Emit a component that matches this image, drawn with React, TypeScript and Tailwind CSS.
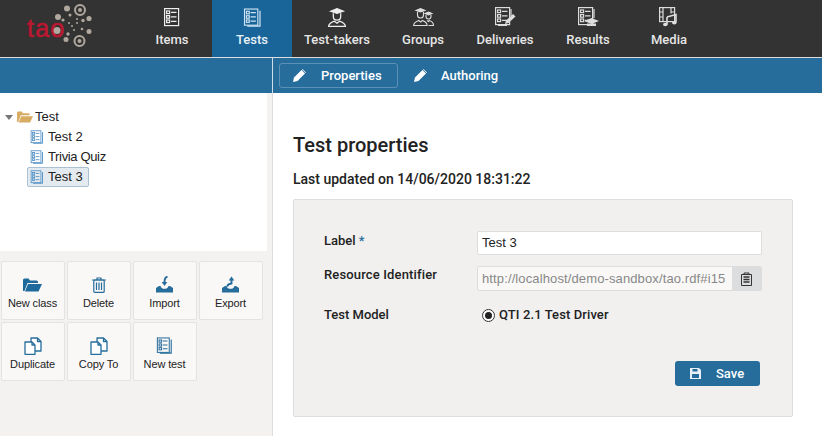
import React from 'react';

// Shared checklist sheet used by items/tests icons
const Sheet = ({ x = 0, y = 0, stroke = 'currentColor', fill = 'none' }: { x?: number; y?: number; stroke?: string; fill?: string }) => (
    <g transform={`translate(${x} ${y})`} stroke={stroke} fill={fill} strokeWidth="1.2">
        <rect x="0.6" y="0.6" width="14" height="17" fill={fill} />
        <rect x="2.6" y="3" width="3" height="2.6" fill="none" />
        <rect x="2.6" y="7.6" width="3" height="2.6" fill="none" />
        <rect x="2.6" y="12" width="3" height="2.6" fill="none" />
        <path d="M7 4.3h5.5M7 8.9h5.5M7 13.3h5.5" />
    </g>
);

const ItemsIcon = () => (
    <svg width="16" height="19" viewBox="0 0 16 19" className="text-[#eee]">
        <Sheet />
    </svg>
);

const TestsIcon = ({ size = 19, className = 'text-[#cfe3f2]' }: { size?: number; className?: string }) => (
    <svg width={size} height={size} viewBox="0 0 19 20" className={className}>
        <path d="M17.4 3v16H4" fill="none" stroke="currentColor" strokeWidth="1.3" />
        <Sheet x={0.5} y={0.5} />
    </svg>
);

const TakersIcon = () => (
    <svg width="20" height="20" viewBox="0 0 18 19" className="text-[#eee]">
        <g fill="none" stroke="currentColor" strokeWidth="1.2">
            <path d="M3 4 9 1.5 15 4 9 6Z" fill="currentColor" />
            <path d="M5.5 6v3c0 2 1.5 3.5 3.5 3.500s3.500-1.500 3.500-3.500V6" />
            <path d="M1 18.500c0-2.500 3-4 5.500-5l2.500 2 2.500-2c2.500 1 5.500 2.500 5.500 5Z" />
        </g>
    </svg>
);

const GroupsIcon = () => (
    <svg width="21" height="20" viewBox="0 0 21 20" className="text-[#ddd]">
        <g fill="none" stroke="currentColor" strokeWidth="1.1">
            <path d="M3 3.500 7.500 1.500 12 3.500 7.500 5Z" fill="currentColor" />
            <path d="M4.500 5v3c0 1.500 1.200 3 3 3s3-1.500 3-3V5" />
            <path d="M.6 18.500c0-2.500 2.500-4 5-5l2 1.500 2-1.500c2.500 1 4.500 2.500 4.500 5Z" />
            <path d="M12 6.500 15.500 5 19 6.500 15.500 8Z" fill="currentColor" />
            <path d="M13 8v1.500c0 1.200 1 2.500 2.500 2.500S18 10.700 18 9.500V8" />
            <path d="M15.500 18.500h5c0-2.500-1.500-4-4-5l-1 1-1.500-1" />
        </g>
    </svg>
);

const DeliveriesIcon = () => (
    <svg width="21" height="20" viewBox="0 0 21 20" className="text-[#ddd]">
        <path d="M3 18.500h9M16 2v7" stroke="currentColor" fill="none" strokeWidth="1.200" />
        <Sheet />
        <path d="M10 17l1-3.500 7-6.500 2.500 2.500-7 6.500Z" fill="currentColor" />
    </svg>
);

const ResultsIcon = () => (
    <svg width="21" height="20" viewBox="0 0 21 20" className="text-[#ddd]">
        <path d="M16 2v9" stroke="currentColor" fill="none" strokeWidth="1.200" />
        <Sheet />
        <path d="M6 14l7.500-3 7.500 3-7.500 3Z" fill="currentColor" />
        <path d="M9 16.500v2.500h9v-2.500" fill="currentColor" />
    </svg>
);

const MediaIcon = () => (
    <svg width="20" height="20" viewBox="0 0 20 20" className="text-[#ddd]">
        <g fill="none" stroke="currentColor" strokeWidth="1.200">
            <rect x="0.6" y="0.6" width="15" height="14" />
            <path d="M4 .6v14M12 .6v6M.6 5h3.400M.6 10h3.400M12 5h3.500" />
        </g>
        <path d="M8 10v7.500M8 10l9-2.500v8" fill="none" stroke="currentColor" strokeWidth="1.600" />
        <ellipse cx="6.300" cy="17.500" rx="2.300" ry="1.800" fill="currentColor" />
        <ellipse cx="15.300" cy="15.700" rx="2.300" ry="1.800" fill="currentColor" />
    </svg>
);

const PencilIcon = () => (
    <svg width="13" height="13" viewBox="0 0 13 13" className="text-white shrink-0">
        <path d="M0 13l1-4.500L8.500 1l3.500 3.500L4.500 12Z" fill="currentColor" />
        <path d="M9.500 0 13 3.500l-.5.500L9 .5Z" fill="currentColor" />
    </svg>
);

const TaoLogo = () => (
    <svg width="80" height="50" viewBox="0 0 80 50" className="block">
        <text x="1" y="35" fill="#bb1731" stroke="#bb1731" strokeWidth="0.6" fontSize="25" letterSpacing="1.2" fontFamily="'Liberation Sans', sans-serif">tao</text>
        <g fill="#b0a89e">
            <circle cx="31" cy="28.500" r="3.500" />
            <circle cx="41" cy="6.500" r="3" />
            <circle cx="32" cy="15" r="3" />
            <circle cx="37" cy="18" r="1.600" />
            <circle cx="44" cy="13" r="1.500" />
            <circle cx="40" cy="37.500" r="2.500" />
            <circle cx="42" cy="32" r="1.700" />
            <circle cx="63" cy="16.500" r="2.600" />
            <circle cx="57" cy="18.500" r="1.700" />
            <circle cx="63" cy="29.500" r="2.500" />
            <circle cx="56" cy="27" r="1.300" />
            <circle cx="46" cy="24" r="1" />
            <circle cx="51" cy="21" r="1" />
            <circle cx="48" cy="28" r="1" />
            <circle cx="51" cy="17" r="1" />
            <circle cx="43" cy="21" r="1" />
        </g>
        <g fill="none" stroke="#b0a89e">
            <circle cx="54" cy="8" r="5" strokeWidth="2" />
            <circle cx="53.500" cy="39" r="5" strokeWidth="2" />
        </g>
        <circle cx="54" cy="8" r="2" fill="#b0a89e" />
        <circle cx="53.500" cy="39" r="2" fill="#b0a89e" />
    </svg>
);

const navItems = [
    { label: 'Items', icon: <ItemsIcon />, width: 'w-[80px]' },
    { label: 'Tests', icon: <TestsIcon />, width: 'w-[80px]', active: true },
    { label: 'Test-takers', icon: <TakersIcon />, width: 'w-[90px]' },
    { label: 'Groups', icon: <GroupsIcon />, width: 'w-[82px]' },
    { label: 'Deliveries', icon: <DeliveriesIcon />, width: 'w-[82px]' },
    { label: 'Results', icon: <ResultsIcon />, width: 'w-[84px]' },
    { label: 'Media', icon: <MediaIcon />, width: 'w-[78px]' },
];

const FolderOpenIcon = ({ className, width = 19, height = 14 }: { className: string; width?: number; height?: number }) => (
    <svg width={width} height={height} viewBox="0 0 19 14" className={className}>
        <path d="M0 13V2q0-1.500 1.500-1.500h4L7 2.500h6.500q1.500 0 1.500 1.500v1H4.500L1.500 13Z" fill="currentColor" />
        <path d="M5 6h14l-3.500 7.500H2Z" fill="currentColor" />
    </svg>
);

const TrashIcon = () => (
    <svg width="14" height="16" viewBox="0 0 14 16" className="text-[#266d9c]">
        <g fill="none" stroke="currentColor" strokeWidth="1.200">
            <path d="M0 3h14M5 3V1h4v2" />
            <rect x="1.800" y="3" width="10.400" height="12.400" rx="1" />
            <path d="M4.500 5.500v7.500M7 5.500v7.500M9.500 5.500v7.500" />
        </g>
    </svg>
);

const TrayIcon = ({ up }: { up?: boolean }) => (
    <svg width="17" height="17" viewBox="0 0 17 17" className="text-[#266d9c]">
        <path d="M0 12 3 10h1.500c.5 2 2.200 2.800 4 2.800s3.500-.8 4-2.800H14l3 2v4.500H0Z" fill="currentColor" />
        {up ? (
            <>
                <path d="M5.200 10.500C5.500 8.500 7.500 7.800 9.500 7.500V4" fill="none" stroke="currentColor" strokeWidth="1.900" />
                <path d="M6.700 4.500h5.600L9.500 .5Z" fill="currentColor" />
            </>
        ) : (
            <>
                <path d="M11.500.5C9.500 1 8.500 2.500 8.500 6" fill="none" stroke="currentColor" strokeWidth="1.900" />
                <path d="M5.700 6h5.600L8.500 10Z" fill="currentColor" />
            </>
        )}
    </svg>
);

const DuplicateIcon = () => (
    <svg width="18" height="18" viewBox="0 0 18 18" className="text-[#266d9c]">
        <g fill="#fff" stroke="currentColor" strokeWidth="1.300" strokeLinejoin="round">
            <path d="M7 1h6.500L17 4.500V14H7Z" />
            <path d="M1 5h7l3 3v9.300H1Z" />
            <path d="M8 5v3h3M13.500 1v3.500H17" fill="none" />
        </g>
    </svg>
);

const actions = [
    { label: 'New class', icon: <FolderOpenIcon className="text-[#1f6a9c]" /> },
    { label: 'Delete', icon: <TrashIcon /> },
    { label: 'Import', icon: <TrayIcon /> },
    { label: 'Export', icon: <TrayIcon up /> },
    { label: 'Duplicate', icon: <DuplicateIcon /> },
    { label: 'Copy To', icon: <DuplicateIcon /> },
    { label: 'New test', icon: <TestsIcon size={17} className="text-[#266d9c]" /> },
];

const TreeIcon = () => <TestsIcon size={14} className="text-[#4f8fc4]" />;

const medium = "font-['Roboto',sans-serif] font-medium";

export default function App() {
    return (
        <div className="w-[822px] h-[436px] overflow-hidden flex flex-col bg-white font-['Liberation_Sans',Arial,sans-serif] text-[#222]">
            <header className="h-[57px] bg-[#333] flex shrink-0">
                <div className="w-[132px] pl-[26px] pt-[2px]">
                    <TaoLogo />
                </div>
                {navItems.map((item) => (
                    <div
                        key={item.label}
                        className={`${item.width} flex flex-col items-center pt-[7px] gap-[5px] ${item.active ? 'bg-[#19659a] text-[#e8f1f8]' : 'text-[#e6e6e6]'}`}
                    >
                        <div className="h-[20px] flex items-center">{item.icon}</div>
                        <span className={`text-[13px] leading-[15px] ${medium}`}>{item.label}</span>
                    </div>
                ))}
            </header>

            <div className="flex-1 flex flex-col border-t border-[#ddd] min-h-0">
                <div className="h-[35px] bg-[#266d9c] flex shrink-0">
                    <div className="w-[272px] border-r border-[#cfdde8] box-content" />
                    <div className={`flex items-center pl-[6px] gap-[1px] text-white text-[13px] ${medium}`}>
                        <div className="h-[25px] w-[119px] border border-[#5b91b6] rounded-[3px] flex items-center pl-[13px] gap-[15px]">
                            <PencilIcon />
                            <span>Properties</span>
                        </div>
                        <div className="h-[25px] flex items-center pl-[15px] gap-[14px]">
                            <PencilIcon />
                            <span>Authoring</span>
                        </div>
                    </div>
                </div>

                <div className="flex-1 flex min-h-0">
                    <aside className="w-[273px] shrink-0 bg-[#f3f2f1] border-r border-[#ddd] flex flex-col">
                        <div className="h-[158px] w-[267px] bg-white pt-[14px] pl-[5px] text-[13px] shrink-0">
                            <div className="h-[20px] flex items-center">
                                <span className="w-0 h-0 border-x-[4px] border-x-transparent border-t-[5px] border-t-[#777] mr-[4px]" />
                                <FolderOpenIcon className="text-[#d8ab62]" width={16} height={12} />
                                <span className="ml-[2px]">Test</span>
                            </div>
                            <div className="pl-[22px] flex flex-col items-start">
                                {['Test 2', 'Trivia Quiz', 'Test 3'].map((name) => (
                                    <div
                                        key={name}
                                        className={`h-[20px] flex items-center gap-[4px] pl-[2px] pr-[5px] rounded-[2px] border ${name === 'Test 3' ? 'bg-[#e4ebf0] border-[#a9c1d3]' : 'border-transparent'}`}
                                    >
                                        <TreeIcon />
                                        <span className={name === 'Trivia Quiz' ? 'tracking-[-0.35px]' : ''}>{name}</span>
                                    </div>
                                ))}
                            </div>
                        </div>
                        <div className="grid grid-cols-[64px_64px_64px_64px] gap-[2px] pt-[10px] pl-[0.5px]">
                            {actions.map((a) => (
                                <div
                                    key={a.label}
                                    className="h-[59px] bg-[#f9f8f7] border border-[#e4e3e1] rounded-[2px] flex flex-col items-center pt-[14px]"
                                >
                                    <div className="h-[17px] flex items-center">{a.icon}</div>
                                    <span className="text-[11px] leading-[13px] mt-[4px] text-[#222] tracking-[-0.12px]">{a.label}</span>
                                </div>
                            ))}
                        </div>
                    </aside>

                    <main className="flex-1 pl-[20px] pr-[29px] pt-[40px]">
                        <h1 className={`text-[20px] leading-[24px] ${medium}`}>Test properties</h1>
                        <p className={`text-[14px] leading-[16px] mt-[14px] ${medium}`}>Last updated on 14/06/2020 18:31:22</p>
                        <section className="mt-[12px] h-[218px] bg-[#f1f0ef] border border-[#ddd] rounded-[2px] pt-[31px] pl-[30px]">
                            <div className="flex items-start h-[35px]">
                                <label className={`w-[153px] text-[13px] leading-[16px] pt-[2px] ${medium}`}>
                                    Label <span className="text-[#266d9c]">*</span>
                                </label>
                                <div className="w-[285px] h-[24px] bg-white border border-[#ddd] rounded-[2px] text-[13px] leading-[22px] px-[4px]">Test 3</div>
                            </div>
                            <div className="flex items-start h-[40px]">
                                <label className={`w-[153px] text-[13px] leading-[16px] pt-[1px] tracking-[0.15px] ${medium}`}>Resource Identifier</label>
                                <div className="w-[285px] h-[25px] flex border border-[#ddd] rounded-[2px] overflow-hidden text-[13px] text-[#888]">
                                    <div className="flex-1 min-w-0 bg-[#f9f8f7] leading-[23px] pl-[4px] tracking-[0.12px] whitespace-nowrap overflow-hidden">http://localhost/demo-sandbox/tao.rdf#i15</div>
                                    <div className="w-[29px] bg-[#dcdddf] flex items-center justify-center shrink-0">
                                        <svg width="11" height="14" viewBox="0 0 11 14" className="text-[#333]">
                                            <path d="M.5 2.500h10v11H.5ZM3 2.500V1h5v1.500" fill="none" stroke="currentColor" />
                                            <path d="M2.500 5h6M2.500 7.500h6M2.500 10h6" stroke="currentColor" strokeWidth="1.500" />
                                        </svg>
                                    </div>
                                </div>
                            </div>
                            <div className="flex items-start">
                                <label className={`w-[153px] text-[13px] leading-[16px] pt-[1px] ${medium}`}>Test Model</label>
                                <div className={`flex items-center pl-[5px] gap-[4px] text-[13px] leading-[18px] tracking-[0.1px] ${medium}`}>
                                    <span className="w-[13px] h-[13px] rounded-full border border-[#333] bg-white flex items-center justify-center">
                                        <span className="w-[7px] h-[7px] rounded-full bg-[#222]" />
                                    </span>
                                    QTI 2.1 Test Driver
                                </div>
                            </div>
                            <div className="w-[438px] flex justify-end pr-[2px] mt-[37px]">
                                <div className={`w-[85px] h-[25px] bg-[#266d9c] rounded-[3px] text-white text-[13px] flex items-center pl-[15px] gap-[15px] ${medium}`}>
                                    <svg width="11" height="11" viewBox="0 0 11 11" className="text-[#e8f1f8]">
                                        <path d="M0 0h9l2 2v9H0Z" fill="currentColor" />
                                        <path d="M2.500 1h5v2.500h-5ZM2 6h7v4H2Z" fill="#266d9c" />
                                    </svg>
                                    <span>Save</span>
                                </div>
                            </div>
                        </section>
                    </main>
                </div>
            </div>
        </div>
    );
}
